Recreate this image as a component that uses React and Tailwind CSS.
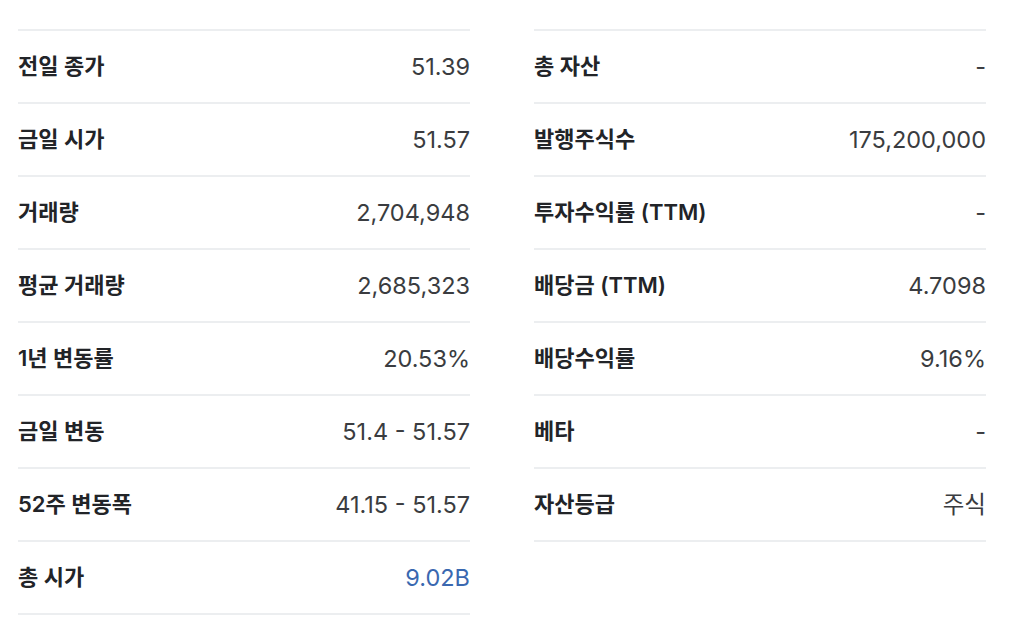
import React from 'react';

const left = [
  { label: '전일 종가', value: '51.39' },
  { label: '금일 시가', value: '51.57' },
  { label: '거래량', value: '2,704,948' },
  { label: '평균 거래량', value: '2,685,323' },
  { label: '1년 변동률', value: '20.53%' },
  { label: '금일 변동', value: '51.4 - 51.57' },
  { label: '52주 변동폭', value: '41.15 - 51.57' },
  { label: '총 시가', value: '9.02B', link: true },
];

const right = [
  { label: '총 자산', value: '-' },
  { label: '발행주식수', value: '175,200,000' },
  { label: '투자수익률 (TTM)', value: '-' },
  { label: '배당금 (TTM)', value: '4.7098' },
  { label: '배당수익률', value: '9.16%' },
  { label: '베타', value: '-' },
  { label: '자산등급', value: '주식' },
];

const Row = ({ label, value, link }) => (
  <div className="flex h-[73px] items-center justify-between border-b-2 border-[#eceef0]">
    <span className="text-[22px] font-semibold text-[#222428]">{label}</span>
    <span className={`text-[23.5px] ${link ? 'text-[#3a68b0]' : 'text-[#3a3c40]'}`}>{value}</span>
  </div>
);

const Column = ({ rows }) => (
  <div className="w-[452px] border-t-2 border-[#eceef0]">
    {rows.map((r) => (
      <Row key={r.label} {...r} />
    ))}
  </div>
);

export default function App() {
  return (
    <div
      className="min-h-[636px] bg-white pl-[18px] pt-[29px] flex gap-[64px] items-start"
      style={{ fontFamily: 'Inter, "Noto Sans CJK KR", sans-serif' }}
    >
      <Column rows={left} />
      <Column rows={right} />
    </div>
  );
}
